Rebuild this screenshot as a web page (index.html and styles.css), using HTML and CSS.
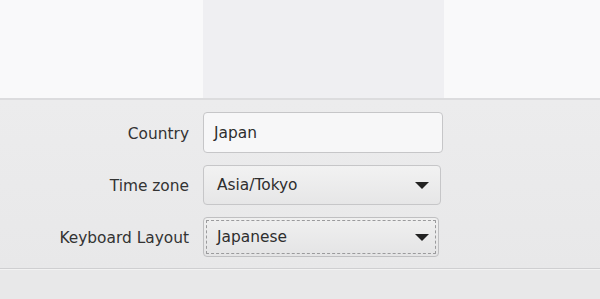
FILE: index.html
```html
<!DOCTYPE html>
<html>
<head>
<meta charset="utf-8">
<link rel="stylesheet" href="styles.css">
</head>
<body>
<div class="top">
  <div class="preview"></div>
</div>
<div class="form">
  <div class="label">Country</div>
  <div class="field entry">Japan</div>
  <div class="label">Time zone</div>
  <div class="field combo"><span>Asia/Tokyo</span><span class="arrow"></span></div>
  <div class="label">Keyboard Layout</div>
  <div class="field combo focus"><span>Japanese</span><span class="arrow"></span></div>
</div>
<div class="bottom"></div>
</body>
</html>
```
FILE: styles.css
```css
html, body {
  margin: 0;
  padding: 0;
}
body {
  width: 600px;
  height: 299px;
  overflow: hidden;
  background: #e8e8e9;
  font-family: "DejaVu Sans", sans-serif;
  font-size: 15.4px;
  color: #2e2e2e;
}
.top {
  height: 98px;
  background: #f9f9fa;
  border-bottom: 2px solid #dcdcde;
  padding-left: 203px;
}
.preview {
  width: 241px;
  height: 98px;
  background: #efeff2;
}
.form {
  display: grid;
  grid-template-columns: 189px auto;
  grid-template-rows: 41px 40px 40px;
  row-gap: 12px;
  column-gap: 14px;
  padding-top: 12px;
  padding-bottom: 11px;
  border-bottom: 1px solid #cfcfd1;
  box-shadow: 0 1px 0 #f3f3f3;
  background: linear-gradient(#ececed, #e8e8e9);
}
.label {
  text-align: right;
  align-self: center;
  padding-top: 2px;
  color: #333;
}
.field {
  box-sizing: border-box;
  border: 1px solid #c6c6c8;
  border-radius: 4px;
  display: flex;
  align-items: center;
  padding-top: 1px;
}
.entry {
  width: 240px;
  height: 41px;
  background: #f7f7f8;
  padding-left: 10px;
}
.combo {
  width: 238px;
  background: linear-gradient(#f2f2f2, #e6e6e7);
  padding: 0 11px 0 13px;
  justify-content: space-between;
}
.combo.focus {
  width: 236px;
  background: linear-gradient(#f0f0f0, #e4e4e5);
  padding: 0 9px 0 13px;
  border-color: #bfbfc1;
  outline: 1px dashed #9a9a9c;
  outline-offset: -4px;
}
.arrow {
  width: 0;
  height: 0;
  border-left: 7px solid transparent;
  border-right: 7px solid transparent;
  border-top: 7px solid #222;
}
```
